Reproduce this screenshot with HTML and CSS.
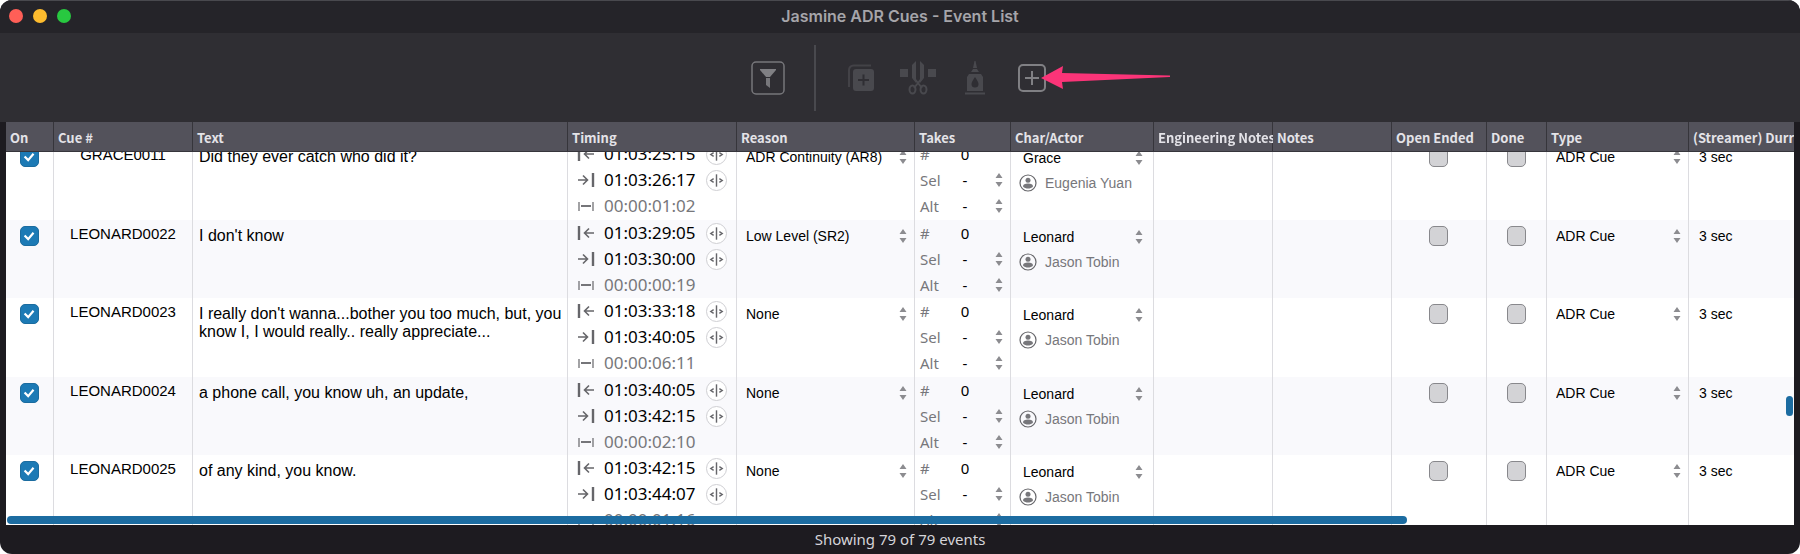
FILE: index.html
```html
<!DOCTYPE html>
<html lang="en">
<head>
<meta charset="utf-8">
<title>Jasmine ADR Cues - Event List</title>
<link rel="stylesheet" href="styles.css">
</head>
<body>
<svg class="sprite" aria-hidden="true">
  <symbol id="i-start" viewBox="0 0 18 14"><path d="M2 0v14" stroke-width="2.4"/><path d="M17 7H8M12 2.500L7.500 7l4.500 4.500" stroke-width="1.6"/></symbol>
  <symbol id="i-end" viewBox="0 0 18 14"><path d="M16 0v14" stroke-width="2.4"/><path d="M1 7h9M6 2.500l4.500 4.500L6 11.500" stroke-width="1.6"/></symbol>
  <symbol id="i-length" viewBox="0 0 18 14"><path d="M2 3v9M16 3v9" stroke-width="1.2"/><path d="M4 7h10" stroke-width="1.8"/></symbol>
  <symbol id="i-nudge" viewBox="0 0 20 20"><path d="M10 3.500v13" stroke-width="1.5"/><path d="M7 8L4 10l3 2M13 8l3 2-3 2" stroke-width="1.5"/></symbol>
  <symbol id="i-steps" viewBox="0 0 8 16"><path d="M4 1l3.500 5h-7zM4 15l3.500-5h-7z" fill="#8c8c90" stroke="none"/></symbol>
  <symbol id="i-person" viewBox="0 0 18 18"><circle cx="9" cy="9" r="8" stroke-width="1.2"/><circle cx="9" cy="6.200" r="2.500" fill="#77777b" stroke="none"/><path d="M4 12.500C4 10.500 6 9.600 9 9.600s5 .9 5 2.900c-1.200 1.400-3 2-5 2s-3.800-.6-5-2z" fill="#77777b" stroke="none"/></symbol>
</svg>
<div class="window">
  <header class="titlebar">
    <div class="lights">
      <button class="light close" aria-label="Close"></button>
      <button class="light minimize" aria-label="Minimize"></button>
      <button class="light zoom" aria-label="Zoom"></button>
    </div>
    <h1>Jasmine ADR Cues - Event List</h1>
  </header>
  <div class="toolbar">
    <button class="tool" aria-label="Filter"><svg width="34" height="34" viewBox="0 0 34 34"><rect x="1" y="1" width="32" height="32" rx="4" fill="none" stroke="#77777b" stroke-width="1.500"/><path d="M9 8h16v1l-6 7H15L9 9z" fill="#808084"/><path d="M15 17h4v10l-4-3z" fill="#77777b"/></svg></button>
    <span class="divider"></span>
    <button class="tool" aria-label="Duplicate" disabled><svg width="26" height="28" viewBox="0 0 26 28"><path d="M1 23V6a4.500 4.500 0 0 1 4.500-4.500H23" fill="none" stroke="#434247" stroke-width="2"/><rect x="5" y="5" width="21" height="22" rx="3" fill="#49494e"/><path d="M15.500 10.500v11M10 16h11" stroke="#2f2e33" stroke-width="2"/></svg></button>
    <button class="tool split" aria-label="Split" disabled><svg width="36" height="34" viewBox="0 0 36 34"><g fill="#49494e"><path d="M0 8h8v8H0zM28 8h8v8h-8zM12 4l4-4v22l-4-5zM24 4l-4-4v22l4-5z"/></g><path d="M14 17l8 10M22 17l-8 10" stroke="#49494e" stroke-width="2"/><ellipse cx="12.500" cy="28.500" rx="3" ry="4" fill="none" stroke="#49494e" stroke-width="2"/><ellipse cx="23.500" cy="28.500" rx="3" ry="4" fill="none" stroke="#49494e" stroke-width="2"/></svg></button>
    <button class="tool" aria-label="Join" disabled><svg width="20" height="34" viewBox="0 0 20 34"><path fill="#49494e" fill-rule="evenodd" d="M9.500 0h1L12 7H8zM8 8h4l2 3H6zM4 13h12l2 3v14H2V16zM10 16q-3.500 5-3.500 7a3.500 3.500 0 0 0 7 0q0-2-3.500-7zM0 31.500h20v2H0z"/></svg></button>
    <span class="add-wrap">
      <button class="tool" aria-label="Add event"><svg width="28" height="28" viewBox="0 0 28 28"><rect x="1" y="1" width="26" height="26" rx="4" fill="none" stroke="#808084" stroke-width="2"/><path d="M14 7v14M7 14h14" stroke="#808084" stroke-width="2"/></svg></button>
      <svg class="arrow" width="130" height="24" viewBox="0 0 130 24" aria-hidden="true"><path d="M0 12L22 0l-1 7 108 2.500v1.500L21 16l1 7z" fill="#fb3478"/></svg>
    </span>
  </div>
  <main class="list">
    <div class="scroller" id="scroller">
      <table>
        <colgroup><col class="c-on"><col class="c-cue"><col><col class="c-timing"><col class="c-reason"><col class="c-takes"><col class="c-actor"><col class="c-notes"><col class="c-notes"><col class="c-open"><col class="c-done"><col class="c-type"><col class="c-duration"></colgroup>
        <thead><tr><th>On</th><th>Cue #</th><th>Text</th><th>Timing</th><th>Reason</th><th>Takes</th><th>Char/Actor</th><th>Engineering Notes</th><th>Notes</th><th>Open Ended</th><th>Done</th><th>Type</th><th>(Streamer) Durration</th></tr></thead>
        <tbody id="rows"></tbody>
      </table>
    </div>
    <span class="thumb-x"></span>
    <span class="thumb-y"></span>
  </main>
  <footer class="status">Showing 79 of 79 events</footer>
</div>
<script src="app.js"></script>
</body>
</html>
```

FILE: styles.css
```css
* { box-sizing: border-box; }
body { margin: 0; background: #fff; font-family: "Liberation Sans", Arial, sans-serif; font-size: 14px; color: #000; }
button { padding: 0; border: 0; background: none; }
svg { display: block; }
.sprite { position: absolute; width: 0; height: 0; }
.window { display: flex; flex-direction: column; height: 100vh; background: #1d1b20; border-radius: 12px; overflow: hidden; }
.titlebar { flex: none; display: grid; grid-template-columns: 1fr auto 1fr; align-items: center; height: 33px; padding: 0 9px 2px; background: #252429; border-top: 1px solid #49494e; }
.titlebar h1 { margin: 0; font: 600 16px/20px "Inter", sans-serif; color: #a6a5aa; }
.lights { display: flex; gap: 10px; }
.light { width: 14px; height: 14px; border-radius: 50%; }
.close { background: #ff5f57; }
.minimize { background: #febc2e; }
.zoom { background: #28c840; }
.toolbar { flex: none; display: flex; align-items: center; justify-content: center; height: 89px; padding-right: 4px; background: #2f2e33; }
.divider { width: 2px; height: 66px; margin: 0 32px 0 29px; background: #49494e; }
.split { margin: 0 29px 0 26px; }
.add-wrap { position: relative; display: flex; margin-left: 33px; }
.arrow { position: absolute; left: 23px; top: 2px; }
.list { position: relative; flex: 1; min-height: 0; margin: 0 6px; background: #fff; }
.scroller { height: 100%; overflow: hidden; }
table { width: calc(100% + 55px); table-layout: fixed; border-collapse: separate; border-spacing: 0; }
.c-on { width: 48px; }
.c-cue { width: 139px; }
.c-timing { width: 169px; }
.c-reason { width: 178px; }
.c-takes { width: 96px; }
.c-actor { width: 143px; }
.c-notes { width: 119px; }
.c-open { width: 95px; }
.c-done { width: 60px; }
.c-type { width: 142px; }
.c-duration { width: 160px; }
th { position: sticky; top: 0; z-index: 1; height: 30px; padding: 2px 0 0 4px; white-space: nowrap; text-align: left; font: 700 13px/20px "Noto Sans CJK SC", sans-serif; color: #e4e3e8; background: #53525b; border-right: 1px solid #36353b; border-bottom: 1px solid #36353b; }
td { height: 78px; padding: 0; vertical-align: top; border-right: 1px solid #dcdce0; }
tr:nth-child(odd) td { height: 79px; }
tr:nth-child(even) td { background: #f9f9fc; }
td svg { fill: none; stroke: #66666a; }
.check { padding-right: 1px; text-align: center; }
input[type="checkbox"] { appearance: none; width: 19px; height: 20px; margin: 6px 0 0; border: 1px solid #88888c; border-radius: 5px; background: #d3d3d6; }
.check input:checked { border-color: #1b6c9f; background: #1c7ab5 url("data:image/svg+xml,%3Csvg xmlns='http://www.w3.org/2000/svg' viewBox='0 0 19 20'%3E%3Cpath d='M4 9.500l4 4 6-7' fill='none' stroke='white' stroke-width='2.500'/%3E%3C/svg%3E") center / 100% no-repeat; }
.cue { padding-top: 5px; text-align: center; font-size: 15px; line-height: 18px; }
.line { padding: 7px 0 0 6px; font-size: 16px; line-height: 18px; }
.timing, .takes { font-family: "Noto Sans", sans-serif; line-height: 26px; }
.timing { padding-left: 9px; font-size: 17px; }
.timing div { display: flex; align-items: center; height: 26px; }
.timing .code { width: 102px; margin-left: 9px; }
.timing .length { color: #77777b; }
.nudge { width: 21px; height: 21px; border: 1px solid #cfcfd3; border-radius: 50%; background: #fff; }
.takes div { display: grid; grid-template-columns: 34px 22px 1fr 8px; align-items: center; height: 26px; padding: 0 7px 0 5px; font-size: 15px; }
.takes label { color: #77777b; }
.takes output { text-align: center; }
.pick { display: flex; align-items: center; justify-content: space-between; height: 20px; margin: 6px 7px 0 9px; }
.pick select { flex: 1; appearance: none; padding: 0; border: 0; background: none; font: inherit; color: inherit; }
.actor .pick { margin: 7px 10px 0 12px; }
.person { display: flex; align-items: center; gap: 8px; height: 18px; margin: 6px 0 0 8px; color: #77777b; }
.seconds { padding: 6px 0 0 10px; line-height: 20px; }
.thumb-x { position: absolute; left: 1px; bottom: 1px; width: 78.3%; height: 8px; border-radius: 4px; background: #1c6ca1; }
.thumb-y { position: absolute; right: 1px; top: 68%; width: 7px; height: 20px; border-radius: 4px; background: #1c6ca1; }
.status { flex: none; height: 29px; text-align: center; font: 15px/29px "Noto Sans", sans-serif; color: #d5d4d9; }
```

FILE: app.js
```javascript
const events = [
  ["GRACE0011", "Did they ever catch who did it?", "01:03:25:15", "01:03:26:17", "00:00:01:02", "ADR Continuity (AR8)", "Grace", "Eugenia Yuan"],
  ["LEONARD0022", "I don't know", "01:03:29:05", "01:03:30:00", "00:00:00:19", "Low Level (SR2)", "Leonard", "Jason Tobin"],
  ["LEONARD0023", "I really don't wanna...bother you too much, but, you know I, I would really.. really appreciate...", "01:03:33:18", "01:03:40:05", "00:00:06:11", "None", "Leonard", "Jason Tobin"],
  ["LEONARD0024", "a phone call, you know uh, an update,", "01:03:40:05", "01:03:42:15", "00:00:02:10", "None", "Leonard", "Jason Tobin"],
  ["LEONARD0025", "of any kind, you know.", "01:03:42:15", "01:03:44:07", "00:00:01:16", "None", "Leonard", "Jason Tobin"]
];

const icon = (name, w, h) => `<svg width="${w}" height="${h}" aria-hidden="true"><use href="#i-${name}"/></svg>`;
const steps = icon("steps", 8, 16);
const nudge = `<button class="nudge" aria-label="Nudge">${icon("nudge", 19, 19)}</button>`;
const pick = (label, value) => `<div class="pick"><select aria-label="${label}"><option>${value}</option></select>${steps}</div>`;
const check = (label, on) => `<td class="check"><input type="checkbox" aria-label="${label}"${on ? " checked" : ""}></td>`;

document.getElementById("rows").innerHTML = events.map(([cue, text, start, end, length, reason, character, actor], i) => `
  <tr>
    ${check("On", true)}
    <td class="cue">${cue}</td>
    <td class="line">${text}</td>
    <td class="timing">
      <div>${icon("start", 18, 14)}<span class="code">${start}</span>${nudge}</div>
      <div>${icon("end", 18, 14)}<span class="code">${end}</span>${nudge}</div>
      <div class="length">${icon("length", 18, 14)}<span class="code">${length}</span></div>
    </td>
    <td>${pick("Reason", reason)}</td>
    <td class="takes">
      <div><label for="n${i}">#</label><output id="n${i}">0</output></div>
      <div><label for="s${i}">Sel</label><output id="s${i}">-</output><span></span>${steps}</div>
      <div><label for="a${i}">Alt</label><output id="a${i}">-</output><span></span>${steps}</div>
    </td>
    <td class="actor">${pick("Character", character)}<div class="person">${icon("person", 18, 18)}${actor}</div></td>
    <td></td>
    <td></td>
    ${check("Open Ended", false)}
    ${check("Done", false)}
    <td>${pick("Type", "ADR Cue")}</td>
    <td class="seconds">3 sec</td>
  </tr>`).join("");

document.getElementById("scroller").scrollTop = 11;
```
